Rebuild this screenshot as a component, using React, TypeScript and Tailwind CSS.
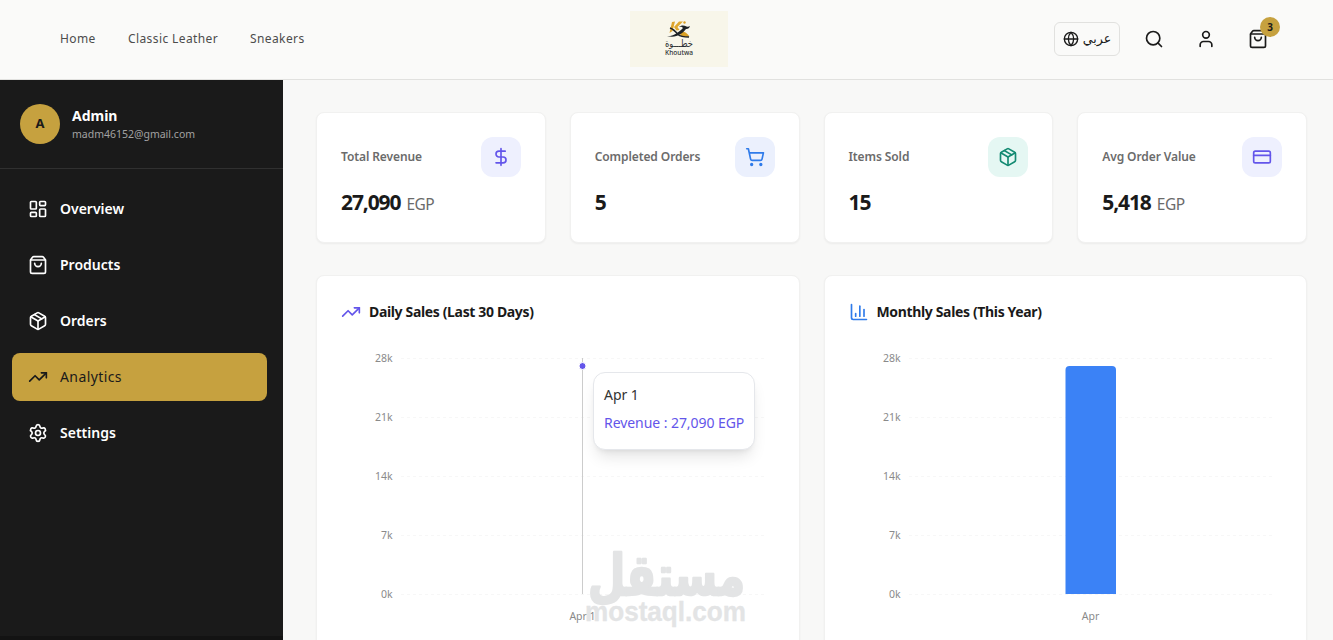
import type { ReactNode } from 'react'
import {
  ChartColumn,
  CreditCard,
  DollarSign,
  Globe,
  LayoutDashboard,
  Package,
  Search,
  Settings,
  ShoppingBag,
  ShoppingCart,
  TrendingUp,
  User,
} from 'lucide-react'

const navLinks = [
  { label: 'Home', className: 'w-9' },
  { label: 'Classic Leather', className: 'w-[90px]' },
  { label: 'Sneakers', className: 'w-[54px]' },
]

const menu = [
  { label: 'Overview', icon: LayoutDashboard },
  { label: 'Products', icon: ShoppingBag },
  { label: 'Orders', icon: Package },
  { label: 'Analytics', icon: TrendingUp, active: true },
  { label: 'Settings', icon: Settings },
]

const stats = [
  { label: 'Total Revenue', value: '27,090', unit: 'EGP', icon: DollarSign, tone: 'bg-[#eef0fe] text-[#6355ea]' },
  { label: 'Completed Orders', value: '5', icon: ShoppingCart, tone: 'bg-[#ebf0fd] text-[#2f7bea]' },
  { label: 'Items Sold', value: '15', icon: Package, tone: 'bg-[#e5f7f3] text-[#138a72]' },
  { label: 'Avg Order Value', value: '5,418', unit: 'EGP', icon: CreditCard, tone: 'bg-[#eef0fe] text-[#6355ea]' },
]

const ticks = ['28k', '21k', '14k', '7k', '0k']

function Logo() {
  return (
    <svg width="98" height="56" viewBox="0 0 98 56">
      <rect width="98" height="56" fill="#f8f6ea" />
      <path d="M42 11l3-.5-2.500 9.500-3 2z" fill="#dda42c" />
      <path d="M44 16l5-5.500h4l-5.500 5.500 2 3-3 .5z" fill="#e0a82e" />
      <path d="M49 21c4-1.500 8 .5 10.500 4.500l-5 .5c-3-.5-5-2.500-5.500-5z" fill="#d9a026" />
      <path d="M37 25c6 .5 11-3 16-8-1-1-2-1.500-4-1 2-2 5-2 7.500-.5 1.500.5 2.500.2 3.500-.5-.5 2-2 3.200-4 3-4 5-10 9.500-19 7z" fill="#1d2226" />
      <path d="M40 17c3 1 6 4 8 6.500 2 1.800 5 2.500 11 2.500" fill="none" stroke="#1d2226" strokeWidth="1.400" />
      <circle cx="54.500" cy="11.500" r="1.200" fill="#d9a026" />
      <text x="35" y="36" textLength="28" lengthAdjust="spacingAndGlyphs" className="font-['DejaVu_Sans',sans-serif] text-[10px]" fill="#2d3033">
        خطـــوة
      </text>
      <text x="35" y="43.500" textLength="28" lengthAdjust="spacingAndGlyphs" className="font-['Noto_Sans',sans-serif] text-[7px] font-medium" fill="#2d3033">
        Khoutwa
      </text>
    </svg>
  )
}

function Header() {
  return (
    <header className="grid h-20 shrink-0 grid-cols-[1fr_auto_1fr] items-center border-b border-[#e1e1df] bg-[#fafaf9] pr-[35px] pb-px pl-[60px]">
      <nav className="flex gap-8 text-[12px] tracking-[0.4px] text-[#4c4c4c]">
        {navLinks.map(link => (
          <a key={link.label} className={`whitespace-nowrap ${link.className}`}>{link.label}</a>
        ))}
      </nav>
      <Logo />
      <div className="flex items-center justify-end pr-[30px] text-[#1a1a1a]">
        <button className="mr-6 flex h-[34px] w-[66px] items-center justify-center gap-1 rounded-md border border-[#e1e1df] text-[12.5px]">
          <Globe size={16} />
          <span className="font-['DejaVu_Sans',sans-serif]">عربي</span>
        </button>
        <div className="flex items-center gap-8">
          <Search size={20} />
          <User size={20} />
          <div className="relative">
            <ShoppingBag size={20} />
            <span className="absolute -top-3 left-3 flex size-5 items-center justify-center rounded-full bg-[#c6a13f] text-[10px] font-bold">3</span>
          </div>
        </div>
      </div>
    </header>
  )
}

function Sidebar() {
  return (
    <aside className="flex w-[283px] shrink-0 flex-col bg-[#1a1a1a]">
      <div className="flex h-[89px] items-center gap-3 border-b border-[#303030] px-5">
        <div className="flex size-10 items-center justify-center rounded-full bg-[#c6a13f] text-[13px] font-bold text-[#1a1a1a]">A</div>
        <div>
          <div className="text-[14px] leading-[19px] font-bold text-white">Admin</div>
          <div className="text-[10.5px] leading-[18px] text-[#a2a2a2]">madm46152@gmail.com</div>
        </div>
      </div>
      <nav className="flex flex-1 flex-col gap-2 pt-4 pr-4 pl-3">
        {menu.map(({ label, icon: Icon, active }) => (
          <a
            key={label}
            className={`flex h-12 items-center gap-3 rounded-lg px-4 text-[14px] ${active ? 'bg-[#c6a13f] tracking-[0.4px] text-[#1a1a1a]' : 'font-semibold text-white'}`}
          >
            <Icon size={20} />
            <span className="pb-px">{label}</span>
          </a>
        ))}
      </nav>
      <div className="h-1 bg-[#131313]" />
    </aside>
  )
}

function StatCard({ stat }: { stat: (typeof stats)[number] }) {
  const Icon = stat.icon
  return (
    <div className="h-[131px] rounded-lg border border-[#f1f1f0] bg-white px-6 pt-6 shadow-xs">
      <div className="flex items-center justify-between">
        <span className="text-[12px] font-semibold tracking-[-0.1px] text-[#6b6b6b]">{stat.label}</span>
        <div className={`flex size-10 items-center justify-center rounded-xl ${stat.tone}`}>
          <Icon size={20} />
        </div>
      </div>
      <div className="mt-[9px] flex items-baseline gap-1.5 leading-8">
        <span className="text-[21px] font-bold tracking-[-1.1px] text-[#1a1a1a]">{stat.value}</span>
        {stat.unit && <span className="text-[15.5px] tracking-[-0.5px] text-[#6b6b6b]">{stat.unit}</span>}
      </div>
    </div>
  )
}

function ChartCard({ title, icon, children }: { title: string; icon: ReactNode; children: ReactNode }) {
  return (
    <div className="h-[400px] rounded-lg border border-[#f1f1f0] bg-white p-6 shadow-xs">
      <h3 className="flex h-6 items-center gap-2 text-[14px] font-bold tracking-[-0.35px] text-[#1a1a1a]">
        {icon}
        <span className="pb-px">{title}</span>
      </h3>
      <div className="relative mt-6">{children}</div>
    </div>
  )
}

function Chart({ label, children }: { label: string; children: ReactNode }) {
  return (
    <svg width="433" height="300" className="block text-[10.5px]">
      {ticks.map((tick, i) => (
        <g key={tick}>
          <line x1="60" x2="423" y1={10.5 + i * 59} y2={10.5 + i * 59} stroke="#f7f7f7" strokeDasharray="3 3" />
          <text x="51.5" y={14 + i * 59} textAnchor="end" fill="#8a8a8a">{tick}</text>
        </g>
      ))}
      {children}
      <text x="241.5" y="272" textAnchor="middle" fill="#8a8a8a">{label}</text>
    </svg>
  )
}

function Watermark() {
  return (
    <svg
      width="166"
      height="84"
      className="pointer-events-none absolute top-[198px] left-[243px] overflow-visible"
      fill="#e3e4e5"
      stroke="#e3e4e5"
      strokeLinejoin="round"
    >
      <text x="4" y="49" textLength="157" lengthAdjust="spacingAndGlyphs" strokeWidth="2.500" className="font-['DejaVu_Sans',sans-serif] text-[56px] font-bold">
        مستقل
      </text>
      <text x="1" y="75" textLength="161" lengthAdjust="spacingAndGlyphs" strokeWidth="0.300" className="font-['Liberation_Sans',sans-serif] text-[27px] font-bold">
        mostaql.com
      </text>
    </svg>
  )
}

export default function App() {
  return (
    <div className="flex h-[640px] w-[1333px] flex-col overflow-hidden bg-[#f8f8f7] font-['Noto_Sans',sans-serif]">
      <Header />
      <div className="flex min-h-0 flex-1">
        <Sidebar />
        <main className="min-w-0 flex-1 overflow-hidden pt-8 pr-[26px] pl-[33px]">
          <div className="grid grid-cols-4 gap-6">
            {stats.map(stat => (
              <StatCard key={stat.label} stat={stat} />
            ))}
          </div>
          <div className="mt-8 grid grid-cols-2 gap-6">
            <ChartCard title="Daily Sales (Last 30 Days)" icon={<TrendingUp size={20} className="text-[#6355ea]" />}>
              <Watermark />
              <Chart label="Apr 1">
                <line x1="241.5" x2="241.5" y1="10" y2="246" stroke="#cccccc" />
                <circle cx="241.5" cy="18" r="3.5" fill="#6355ea" stroke="#ffffff" />
              </Chart>
              <div className="absolute top-6 left-[252px] flex h-[78px] w-[162px] flex-col gap-1 rounded-xl border border-[#e5e7eb] bg-white px-2.5 pt-2.5 text-[14px] leading-6 tracking-[-0.06px] whitespace-nowrap shadow-lg">
                <p className="text-[#333333]">Apr 1</p>
                <p className="text-[#6355ea]">Revenue : 27,090 EGP</p>
              </div>
            </ChartCard>
            <ChartCard title="Monthly Sales (This Year)" icon={<ChartColumn size={20} className="text-[#2f7bea]" />}>
              <Chart label="Apr">
                <path d="M216.5 246V22a4 4 0 0 1 4-4h42.500a4 4 0 0 1 4 4v224z" fill="#3b82f6" />
              </Chart>
            </ChartCard>
          </div>
        </main>
      </div>
    </div>
  )
}
